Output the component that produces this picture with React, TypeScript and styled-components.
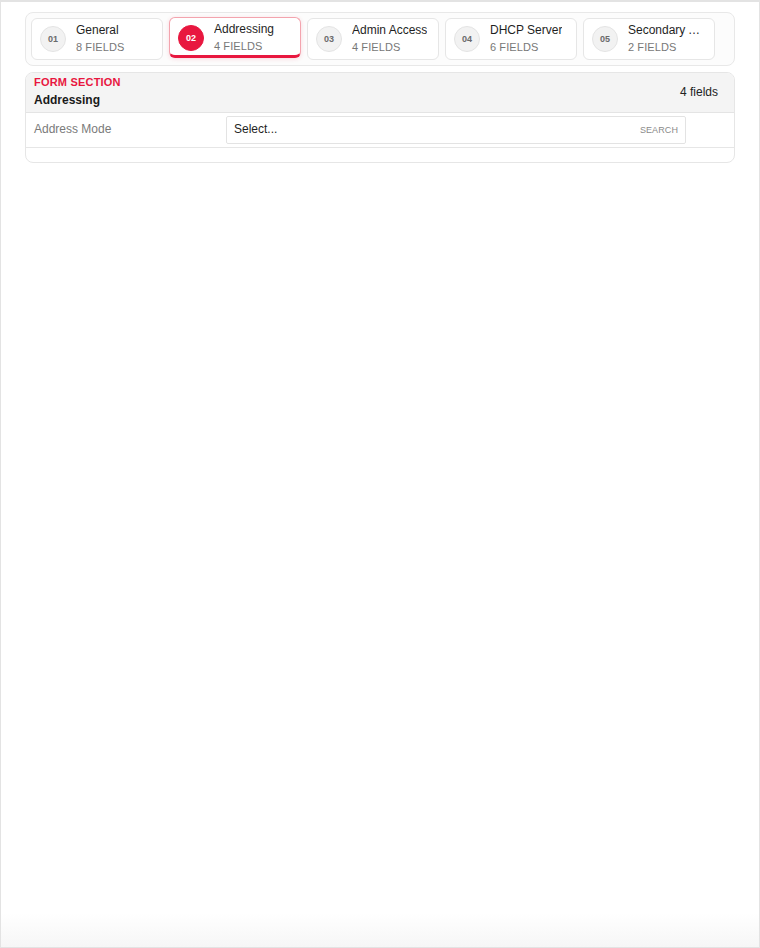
import styled, { createGlobalStyle } from "styled-components";

const GlobalStyle = createGlobalStyle`
  html, body {
    margin: 0;
    padding: 0;
    background: #fff;
  }
  body {
    font-family: "Liberation Sans", Arial, sans-serif;
    color: #222;
  }
`;

const Frame = styled.div`
  box-sizing: border-box;
  width: 760px;
  height: 948px;
  border: 1px solid #e3e3e3;
  border-top: 2px solid #e3e3e3;
  padding: 10px 24px;
  display: flex;
  flex-direction: column;
  gap: 6px;
  background: linear-gradient(to bottom, #fff calc(100% - 34px), #f6f6f6 100%);
`;

const TabBar = styled.div`
  display: flex;
  gap: 6px;
  padding: 5px;
  border: 1px solid #e8e8e8;
  border-radius: 8px;
  background: #fcfcfc;
`;

const Tab = styled.div<{ $active?: boolean }>`
  box-sizing: border-box;
  width: 132px;
  height: 42px;
  display: flex;
  align-items: center;
  gap: 10px;
  padding: 0 8px;
  background: #fff;
  border: 1px solid ${(p) => (p.$active ? "#f3a4ae" : "#e6e6e6")};
  border-radius: 6px;
  ${(p) =>
    p.$active &&
    `
    height: 41px;
    transform: translateY(-1px);
    border-bottom: 3px solid #e8173f;
    padding-top: 2px;
    box-shadow: 0 1px 4px rgba(232, 23, 63, 0.16);
  `}
`;

const Badge = styled.div<{ $active?: boolean }>`
  flex: none;
  width: 26px;
  height: 26px;
  border-radius: 50%;
  display: flex;
  align-items: center;
  justify-content: center;
  font-size: 9px;
  font-weight: 700;
  color: ${(p) => (p.$active ? "#fff" : "#6b6b6b")};
  background: ${(p) => (p.$active ? "#e8173f" : "#f2f2f2")};
  border: 1px solid ${(p) => (p.$active ? "#e8173f" : "#e4e4e4")};
  box-sizing: border-box;
`;

const TabText = styled.div`
  display: flex;
  flex-direction: column;
  gap: 4px;
  min-width: 0;
  margin-top: -1px;
`;

const TabTitle = styled.div`
  font-size: 12px;
  line-height: 14px;
  color: #1f1f1f;
  white-space: nowrap;
  overflow: hidden;
  text-overflow: ellipsis;
`;

const TabMeta = styled.div`
  font-size: 11px;
  line-height: 13px;
  color: #777;
  letter-spacing: 0.1px;
  text-transform: uppercase;
`;

const Section = styled.div`
  border: 1px solid #e6e6e6;
  border-radius: 8px;
  overflow: hidden;
  background: #fff;
`;

const SectionHeader = styled.div`
  display: flex;
  align-items: center;
  justify-content: space-between;
  padding: 2px 16px 4px 8px;
  background: #f4f4f4;
  border-bottom: 1px solid #e4e4e4;
`;

const HeaderText = styled.div`
  display: flex;
  flex-direction: column;
  gap: 3px;
`;

const Eyebrow = styled.div`
  font-size: 11px;
  line-height: 14px;
  font-weight: 700;
  letter-spacing: 0.2px;
  color: #e8173f;
  text-transform: uppercase;
`;

const SectionTitle = styled.div`
  font-size: 12px;
  line-height: 16px;
  font-weight: 700;
  color: #1a1a1a;
`;

const FieldCount = styled.div`
  font-size: 12px;
  color: #222;
`;

const FieldRow = styled.div`
  display: grid;
  grid-template-columns: 192px 1fr 40px;
  align-items: center;
  padding: 3px 8px 3px;
  border-bottom: 1px solid #e6e6e6;
`;

const FieldLabel = styled.div`
  font-size: 12px;
  color: #7a7a7a;
  margin-top: -2px;
`;

const SelectBox = styled.div`
  box-sizing: border-box;
  height: 28px;
  display: flex;
  align-items: center;
  justify-content: space-between;
  padding: 0 7px 0 7px;
  border: 1px solid #e3e3e3;
  border-radius: 2px;
  background: #fff;
`;

const SelectValue = styled.span`
  font-size: 12px;
  color: #1f1f1f;
  margin-top: -2px;
`;

const SearchHint = styled.span`
  font-size: 9px;
  letter-spacing: 0.1px;
  color: #8a8a8a;
  text-transform: uppercase;
`;

const SectionFooter = styled.div`
  height: 14px;
`;

const steps = [
  { n: "01", title: "General", fields: 8 },
  { n: "02", title: "Addressing", fields: 4 },
  { n: "03", title: "Admin Access", fields: 4 },
  { n: "04", title: "DHCP Server", fields: 6 },
  { n: "05", title: "Secondary Addresses", fields: 2 },
];

export default function App() {
  const active = "02";
  return (
    <>
      <GlobalStyle />
      <Frame>
        <TabBar>
          {steps.map((s) => (
            <Tab key={s.n} $active={s.n === active}>
              <Badge $active={s.n === active}>{s.n}</Badge>
              <TabText>
                <TabTitle>{s.title}</TabTitle>
                <TabMeta>{s.fields} fields</TabMeta>
              </TabText>
            </Tab>
          ))}
        </TabBar>
        <Section>
          <SectionHeader>
            <HeaderText>
              <Eyebrow>Form section</Eyebrow>
              <SectionTitle>Addressing</SectionTitle>
            </HeaderText>
            <FieldCount>4 fields</FieldCount>
          </SectionHeader>
          <FieldRow>
            <FieldLabel>Address Mode</FieldLabel>
            <SelectBox>
              <SelectValue>Select...</SelectValue>
              <SearchHint>Search</SearchHint>
            </SelectBox>
          </FieldRow>
          <SectionFooter />
        </Section>
      </Frame>
    </>
  );
}
